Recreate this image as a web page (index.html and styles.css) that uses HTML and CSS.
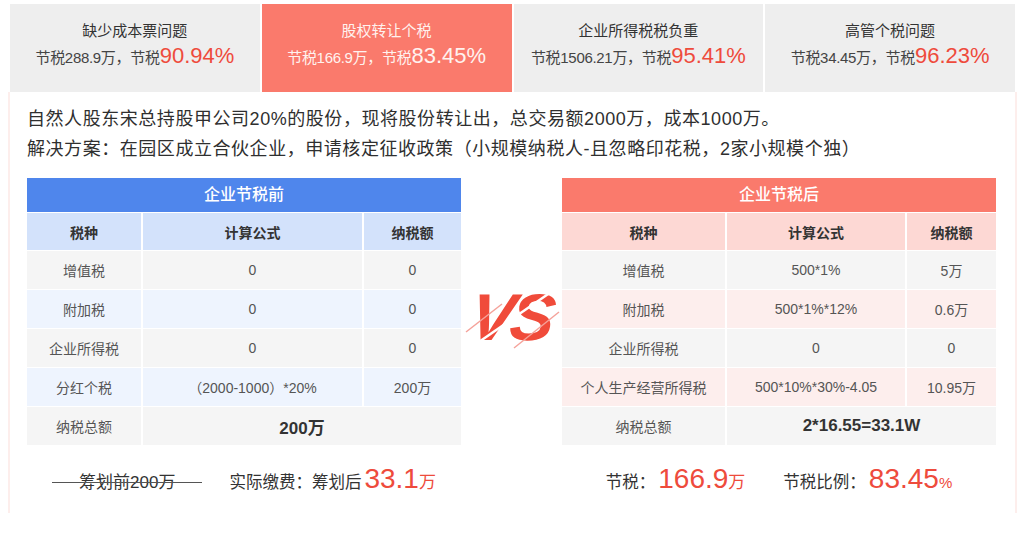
FILE: index.html
```html
<!DOCTYPE html>
<html lang="zh-CN">
<head>
<meta charset="utf-8">
<link rel="stylesheet" href="styles.css">
</head>
<body>
<div class="page">
  <div class="tabs">
    <div class="tab">
      <div class="tab-title">缺少成本票问题</div>
      <div class="tab-sub">节税288.9万，节税<span class="pct">90.94%</span></div>
    </div>
    <div class="tab active">
      <div class="tab-title">股权转让个税</div>
      <div class="tab-sub">节税166.9万，节税<span class="pct">83.45%</span></div>
    </div>
    <div class="tab">
      <div class="tab-title">企业所得税税负重</div>
      <div class="tab-sub">节税1506.21万，节税<span class="pct">95.41%</span></div>
    </div>
    <div class="tab">
      <div class="tab-title">高管个税问题</div>
      <div class="tab-sub">节税34.45万，节税<span class="pct">96.23%</span></div>
    </div>
  </div>

  <div class="panel">
    <p class="desc">自然人股东宋总持股甲公司20%的股份，现将股份转让出，总交易额2000万，成本1000万。</p>
    <p class="desc">解决方案：在园区成立合伙企业，申请核定征收政策（小规模纳税人-且忽略印花税，2家小规模个独）</p>

    <div class="compare">
      <div class="side">
        <div class="table before">
          <div class="t-title">企业节税前</div>
          <div class="t-grid">
            <div class="th">税种</div><div class="th">计算公式</div><div class="th">纳税额</div>
            <div class="td">增值税</div><div class="td">0</div><div class="td">0</div>
            <div class="td alt">附加税</div><div class="td alt">0</div><div class="td alt">0</div>
            <div class="td">企业所得税</div><div class="td">0</div><div class="td">0</div>
            <div class="td alt">分红个税</div><div class="td alt">（2000-1000）*20%</div><div class="td alt">200万</div>
            <div class="td">纳税总额</div><div class="td total">200万</div>
          </div>
        </div>
        <div class="summary left-sum">
          <span class="strike">筹划前200万</span>
          <span class="sum-item">实际缴费：筹划后<span class="big">33.1</span><span class="unit">万</span></span>
        </div>
      </div>

      <div class="vs">
        <span class="vs-text">VS</span>
        <svg class="vs-slash" width="100" height="70" viewBox="0 0 100 70">
          <line x1="4" y1="50" x2="40" y2="22" stroke="#f5a29a" stroke-width="1.5"/>
          <line x1="14" y1="62" x2="92" y2="8" stroke="#ffffff" stroke-width="2.5"/>
          <line x1="52" y1="66" x2="97" y2="30" stroke="#f5a29a" stroke-width="1.5"/>
        </svg>
      </div>

      <div class="side">
        <div class="table after">
          <div class="t-title">企业节税后</div>
          <div class="t-grid">
            <div class="th">税种</div><div class="th">计算公式</div><div class="th">纳税额</div>
            <div class="td">增值税</div><div class="td">500*1%</div><div class="td">5万</div>
            <div class="td alt">附加税</div><div class="td alt">500*1%*12%</div><div class="td alt">0.6万</div>
            <div class="td">企业所得税</div><div class="td">0</div><div class="td">0</div>
            <div class="td alt">个人生产经营所得税</div><div class="td alt">500*10%*30%-4.05</div><div class="td alt">10.95万</div>
            <div class="td">纳税总额</div><div class="td total">2*16.55=33.1W</div>
          </div>
        </div>
        <div class="summary right-sum">
          <span class="sum-item">节税：<span class="big">166.9</span><span class="unit">万</span></span>
          <span class="sum-item">节税比例：<span class="big">83.45</span><span class="unit pct-unit">%</span></span>
        </div>
      </div>
    </div>
  </div>
</div>
</body>
</html>
```

FILE: styles.css
```css
* { box-sizing: border-box; }
html, body { margin: 0; padding: 0; background: #fff; }
body {
  font-family: "Liberation Sans", "Noto Sans CJK SC", sans-serif;
  color: #333;
}
.page {
  width: 1025px;
  height: 559px;
  padding: 4px 0 0 8px;
}
.tabs {
  display: flex;
  gap: 2px;
  width: 1009px;
  padding: 0 2px;
}
.tab {
  width: 250px;
  height: 88px;
  background: #eeeeee;
  display: flex;
  flex-direction: column;
  align-items: center;
  justify-content: center;
  padding-bottom: 4px;
}
.tab-title {
  font-size: 15px;
  line-height: 22px;
  color: #333;
}
.tab-sub {
  font-size: 15px;
  line-height: 28px;
  color: #444;
  letter-spacing: -0.3px;
}
.tab .pct {
  font-size: 22px;
  color: #ee4b3c;
  letter-spacing: 0;
}
.tab.active { background: #fa7a6c; }
.tab.active .tab-title,
.tab.active .tab-sub,
.tab.active .pct { color: #fff2ef; }

.panel {
  width: 1009px;
  height: 421px;
  border-left: 2px solid #fdeeec;
  border-right: 2px solid #fdeeec;
  padding: 12px 19px 0 17px;
}
.desc {
  margin: 0;
  font-size: 18px;
  line-height: 30px;
  color: #2f2f2f;
  letter-spacing: 0.55px;
  white-space: nowrap;
}
.compare {
  display: flex;
  justify-content: space-between;
  margin-top: 14px;
}
.side { width: 434px; }
.table { width: 434px; }
.t-title {
  height: 34px;
  line-height: 34px;
  text-align: center;
  color: #fff;
  font-size: 16px;
  font-weight: 500;
}
.t-grid {
  display: grid;
  gap: 1px 2px;
  margin-top: 1px;
}
.before .t-grid { grid-template-columns: 114px 219px 97px; }
.after .t-grid { grid-template-columns: 163px 178px 89px; }
.before .t-title { background: #4f86ec; }
.after .t-title { background: #fa7a6c; }
.th, .td {
  height: 38px;
  display: flex;
  align-items: center;
  justify-content: center;
  font-size: 14px;
  white-space: nowrap;
}
.th { font-weight: 700; color: #333; height: 37px; }
.before .th { background: #d3e2fb; }
.after .th { background: #fdd8d4; }
.td { background: #f5f5f5; color: #555; }
.before .td.alt { background: #eef4fe; }
.after .td.alt { background: #fdeeed; }
.td.total {
  grid-column: span 2;
  font-size: 17px;
  font-weight: 700;
  color: #333;
}

.vs {
  position: relative;
  width: 100px;
  height: 70px;
  align-self: flex-start;
  margin-top: 104px;
  display: flex;
  align-items: center;
  justify-content: center;
}
.vs-text {
  font-weight: 700;
  font-style: italic;
  font-size: 66px;
  color: #f04b3a;
  letter-spacing: -4px;
  line-height: 1;
  transform: skewX(-8deg);
}
.vs-slash {
  position: absolute;
  left: 0;
  top: 0;
}

.summary {
  display: flex;
  justify-content: center;
  align-items: baseline;
  margin-top: 18px;
  height: 30px;
  font-size: 16px;
  color: #333;
}
.left-sum { gap: 27px; }
.right-sum { gap: 38px; }
.strike {
  position: relative;
  padding: 0 27px;
  color: #333;
  font-size: 17px;
}
.strike::after {
  content: "";
  position: absolute;
  left: 0;
  right: 0;
  top: 54%;
  border-top: 1px solid #555;
}
.sum-item { font-size: 16.5px; }
.big {
  font-size: 28px;
  color: #ee4b3c;
  margin-left: 3px;
}
.unit {
  font-size: 17px;
  color: #ee4b3c;
}
.pct-unit { font-size: 15px; }
```
